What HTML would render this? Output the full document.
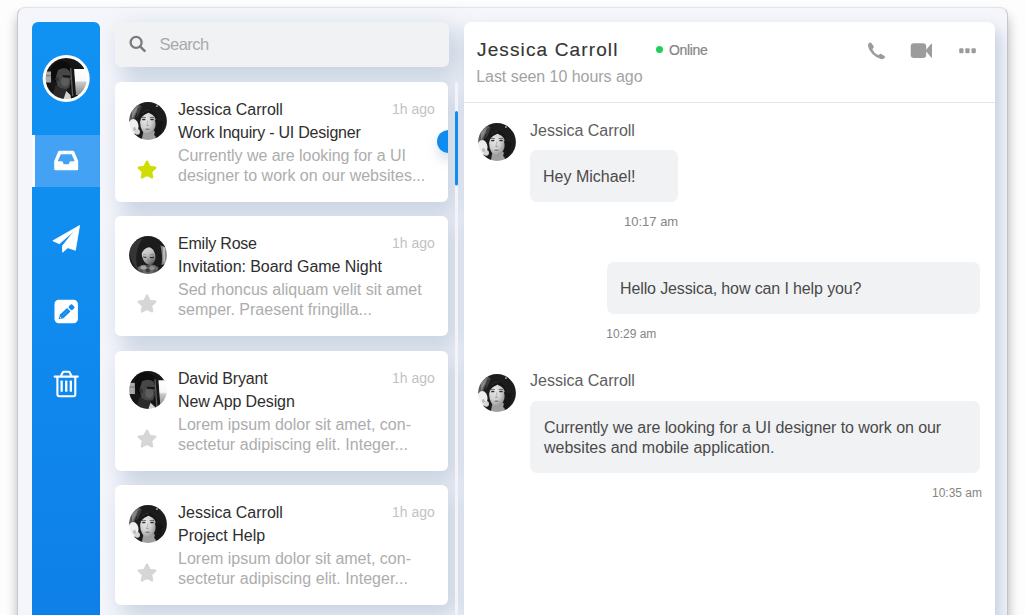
<!DOCTYPE html>
<html lang="en">
<head>
<meta charset="utf-8">
<title>Mail</title>
<style>
*{box-sizing:border-box;margin:0;padding:0}
html,body{width:1025px;height:615px;overflow:hidden;background:#fdfdfd;font-family:"Liberation Sans",sans-serif;}
#stage{position:absolute;left:0;top:0;width:1025px;height:615px;overflow:hidden;background:#fdfdfd}
#win{position:absolute;left:17px;top:7px;width:991px;height:640px;border-radius:8px;background:#f5f6fb;border:1px solid #c9c9cc;border-top-color:#e3e3e6;box-shadow:0 8px 12px rgba(0,0,0,.27)}
.abs{position:absolute}
.t{position:absolute;white-space:nowrap;line-height:20px;height:20px}
#side{position:absolute;left:32px;top:22px;width:68px;height:620px;background:linear-gradient(to bottom,#1092f3 0,#108ef0 190px,#0e80e8 593px);border-radius:6px 6px 0 0}
#side .act{position:absolute;left:3px;top:112.500px;width:65px;height:52.500px;background:#43a2f4}
#side .actbar{position:absolute;left:0;top:112.500px;width:3.200px;height:52.500px;background:#fbfbfe}
#search{position:absolute;left:115px;top:22px;width:334px;height:45px;border-radius:6px;background:#f1f2f4;box-shadow:8px 9px 22px 3px rgba(80,118,160,.27)}
.card{position:absolute;left:115px;width:333px;height:120px;background:#fff;border-radius:6px;box-shadow:8px 9px 22px 3px rgba(80,118,160,.27);overflow:hidden}
.av{position:absolute;width:38px;height:38px;display:block}
.star{position:absolute;display:block}
.ic{position:absolute;display:block;left:0;top:0}
.name{font-size:16px;color:#2e2e2e}
.subj{font-size:16px;color:#2e2e2e}
.prev{font-size:16px;color:#adadad}
.ago{font-size:14px;color:#c2c2c2}
#chat{position:absolute;left:464px;top:22px;width:531px;height:620px;background:#fff;border-radius:7px 7px 0 0;box-shadow:5px 8px 16px rgba(82,114,162,.31)}
.bub{position:absolute;background:#f1f2f4;border-radius:7px}
.msg{font-size:16px;color:#4a4a4a}
.tm{font-size:13px;color:#858585}
.who{font-size:16px;color:#5e5e5e}
</style>
</head>
<body>
<div id="stage">
<div id="win"></div>

<!-- sidebar -->
<div id="side"><div class="act"></div><div class="actbar"></div></div>



<!-- list -->
<div id="search"></div>
<div class="t" id="srch" style="left:159.500px;top:33.800px;font-size:16.500px;color:#a9a9a9;letter-spacing:-.5px">Search</div>

<div class="card" style="top:82px">
<svg class="av" style="left:14.200px;top:19.600px" width="38" height="38" viewBox="0 0 38 38"><defs><clipPath id="k1"><circle cx="19" cy="19" r="18.900"/></clipPath><filter id="f1" x="-10%" y="-10%" width="120%" height="120%"><feGaussianBlur stdDeviation=".55"/></filter><radialGradient id="g1" cx=".36" cy=".33" r=".8"><stop offset="0" stop-color="#e8e8e8"/><stop offset=".5" stop-color="#d0d0d0"/><stop offset=".8" stop-color="#a2a2a2"/><stop offset="1" stop-color="#808080"/></radialGradient></defs><g clip-path="url(#k1)"><g filter="url(#f1)"><rect x="-2" y="-2" width="42" height="42" fill="#1b1b1b"/><path d="M-1 9 L8 2 L12 4 L7 12 L4 21 L-1 24Z" fill="#5a5a5a"/><path d="M3 9 L9 4 L7 10 L3 17Z" fill="#858585"/><path d="M9 6 L13 4 L9.500 13 L7 16Z" fill="#3d3d3d"/><ellipse cx="4.300" cy="24.500" rx="5.200" ry="7.500" fill="#efefef"/><ellipse cx="8.300" cy="29.800" rx="2.700" ry="2.900" fill="#d6d6d6"/><ellipse cx="5.500" cy="27" rx="1.600" ry="2" fill="#bdbdbd"/><path d="M14.500 29 L25.500 29 L27.500 39 L12.500 39Z" fill="#9f9f9f"/><ellipse cx="19" cy="20.600" rx="7.900" ry="12" fill="url(#g1)"/><path d="M10.600 20 Q11.300 9 19.500 8 Q27.700 8.500 28.400 21 Q26.500 13.500 21 11.600 Q19.500 9.800 18 11.600 Q12.500 13.500 10.600 20Z" fill="#181818"/><path d="M25.800 18 Q28.500 25 25 33 L30 37 L34 20Z" fill="#181818"/><path d="M12.600 15.700 Q14.800 14.900 17 15.700" stroke="#4a4a4a" stroke-width=".8" fill="none"/><path d="M20.800 15.700 Q23 14.900 25.200 15.700" stroke="#4a4a4a" stroke-width=".8" fill="none"/><ellipse cx="14.800" cy="17.500" rx="1.800" ry=".85" fill="#2b2b2b"/><ellipse cx="23" cy="17.500" rx="1.800" ry=".85" fill="#2b2b2b"/><path d="M18.700 18.500 L18.200 22.600" stroke="#b2b2b2" stroke-width=".9" fill="none"/><ellipse cx="18.500" cy="23.300" rx="1.500" ry=".6" fill="#9a9a9a"/><path d="M15.800 26.900 Q18.500 25.900 21.200 26.900 Q18.500 28.700 15.800 26.900Z" fill="#6e6e6e"/><rect x="27" y="3.200" width="1.800" height="1.800" fill="#9a9a9a"/></g></g></svg>
<svg class="star" style="left:22px;top:77.800px" width="20" height="20" viewBox="0 0 20 20"><path d="M10.00 1.60 L12.59 6.84 L18.37 7.68 L14.18 11.76 L15.17 17.52 L10.00 14.80 L4.83 17.52 L5.82 11.76 L1.63 7.68 L7.41 6.84Z" fill="#cede05" stroke="#cede05" stroke-width="2.200" stroke-linejoin="round"/></svg>
<div class="t name" id="c0n" style="left:63px;top:18px">Jessica Carroll</div>
<div class="t ago" id="c0a" style="left:277px;top:17.200px">1h ago</div>
<div class="t subj" id="c0s" style="left:63px;top:41px;letter-spacing:-.216px">Work Inquiry - UI Designer</div>
<div class="t prev" id="c0p" style="left:63px;top:64px;letter-spacing:-.044px">Currently we are looking for a UI</div>
<div class="t prev" id="c0q" style="left:63px;top:84px">designer to work on our websites...</div>
<div class="abs" style="left:322px;top:47.800px;width:23.200px;height:23.200px;border-radius:50%;background:#108cf0;box-shadow:0 7px 12px rgba(60,100,170,.2)"></div>
</div>
<div class="card" style="top:216px">
<svg class="av" style="left:14.200px;top:19.600px" width="38" height="38" viewBox="0 0 38 38"><defs><clipPath id="k2"><circle cx="19" cy="19" r="18.900"/></clipPath><filter id="f2" x="-10%" y="-10%" width="120%" height="120%"><feGaussianBlur stdDeviation=".55"/></filter><linearGradient id="g2" x1=".3" y1="0" x2=".6" y2="1"><stop offset="0" stop-color="#dedede"/><stop offset=".45" stop-color="#c4c4c4"/><stop offset=".8" stop-color="#828282"/><stop offset="1" stop-color="#505050"/></linearGradient></defs><g clip-path="url(#k2)"><g filter="url(#f2)"><rect x="-2" y="-2" width="42" height="42" fill="#1e1e1e"/><path d="M1 14 Q4 4 14 2.500 Q9 8 7.500 18 Q6.500 27 9 34 Q1 27 1 14Z" fill="#363636"/><path d="M31.500 9.500 L39 12 L39 27 L32.500 29 Q34 19 31.500 9.500Z" fill="#8a8a8a"/><path d="M34 11 L36 11.500 L36 26 L34.500 26.500Z" fill="#bdbdbd"/><ellipse cx="19.600" cy="19.300" rx="6.600" ry="9.800" transform="rotate(-15 19.600 19.300)" fill="url(#g2)"/><path d="M12 18.500 Q12.500 9.300 19 8.300 Q27.200 8.800 28 19.500 Q25.500 13 20.500 11.200 Q15 11.500 12 18.500Z" fill="#1a1a1a"/><path d="M26.500 16 Q29 22 27 29 L31 30 L32 18Z" fill="#1a1a1a"/><path d="M14 18.900 Q15.600 18.100 17.400 18.800" stroke="#7a7a7a" stroke-width=".7" fill="none"/><path d="M20.800 19 Q22.800 18.200 25 18.900" stroke="#7a7a7a" stroke-width=".7" fill="none"/><path d="M14.300 20.700 Q15.800 21.800 17.400 21" stroke="#2c2c2c" stroke-width="1.100" fill="none"/><path d="M20.900 21.200 Q22.900 22.300 24.900 20.900" stroke="#2c2c2c" stroke-width="1.200" fill="none"/><ellipse cx="19.300" cy="24.300" rx="1.300" ry=".8" fill="#858585"/><path d="M8.500 31.500 Q13 27.500 18 29.500 Q24 27 29.500 31.500 L27 39 L11 39Z" fill="#686868"/><ellipse cx="14.500" cy="31.500" rx="3" ry="2" fill="#a3a3a3"/><ellipse cx="23" cy="32" rx="2.800" ry="2" fill="#8e8e8e"/><ellipse cx="18.800" cy="34.500" rx="2.200" ry="2" fill="#3d3d3d"/><ellipse cx="19" cy="30" rx="1.800" ry="1.300" fill="#4a4a4a"/><ellipse cx="26" cy="35" rx="2" ry="1.500" fill="#4d4d4d"/><ellipse cx="12" cy="35" rx="2" ry="1.500" fill="#505050"/></g></g></svg>
<svg class="star" style="left:22px;top:77.800px" width="20" height="20" viewBox="0 0 20 20"><path d="M10.00 1.60 L12.59 6.84 L18.37 7.68 L14.18 11.76 L15.17 17.52 L10.00 14.80 L4.83 17.52 L5.82 11.76 L1.63 7.68 L7.41 6.84Z" fill="#d6d6d6" stroke="#d6d6d6" stroke-width="2.200" stroke-linejoin="round"/></svg>
<div class="t name" id="c1n" style="left:63px;top:18px;letter-spacing:-.21px">Emily Rose</div>
<div class="t ago" id="c1a" style="left:277px;top:17.200px">1h ago</div>
<div class="t subj" id="c1s" style="left:63px;top:41px;letter-spacing:-.056px">Invitation: Board Game Night</div>
<div class="t prev" id="c1p" style="left:63px;top:64px">Sed rhoncus aliquam velit sit amet</div>
<div class="t prev" id="c1q" style="left:63px;top:84px">semper. Praesent fringilla...</div>
</div>
<div class="card" style="top:351px">
<svg class="av" style="left:14.200px;top:19.600px" width="38" height="38" viewBox="0 0 38 38"><defs><clipPath id="k3"><circle cx="19" cy="19" r="18.900"/></clipPath><filter id="f3" x="-10%" y="-10%" width="120%" height="120%"><feGaussianBlur stdDeviation=".55"/></filter><linearGradient id="g3" x1="0" y1="0" x2="0" y2="1"><stop offset="0" stop-color="#fff"/><stop offset=".45" stop-color="#f8f8f8"/><stop offset=".52" stop-color="#c9c9c9"/><stop offset="1" stop-color="#858585"/></linearGradient></defs><g clip-path="url(#k3)"><g filter="url(#f3)"><g transform="translate(21.400 19) scale(1.020) translate(-66.200 -78.500)">
<rect x="40" y="52" width="52" height="52" fill="#131313"/>
<rect x="40" y="71.500" width="11" height="11" fill="#a9a9a9"/>
<rect x="40" y="75" width="11" height="1.200" fill="#7d7d7d"/>
<path d="M73.500 69 L92 69 L92 95 L75.500 95Z" fill="url(#g3)"/>
<ellipse cx="61.500" cy="72.500" rx="10.500" ry="11" fill="#0d0d0d"/>
<path d="M55.500 85 L67 89 L67 101 L51 101Z" fill="#2b2b2b"/>
<path d="M58 70 Q64.500 66.500 69.300 70.500 L70.600 74.500 L72 78.600 L70.200 80 L70.500 83.300 L68.600 88.500 Q62 90 57.500 86 L55.500 78.500 Z" fill="#474747"/>
<ellipse cx="65" cy="81.500" rx="4" ry="5" fill="#5c5c5c"/>
<ellipse cx="57.300" cy="79.500" rx="1.600" ry="2.600" fill="#333"/>
<path d="M62.500 75.200 L71 75.600 L70.800 77.700 L63.500 77.400Z" fill="#121212"/>
<path d="M70.200 62 L73.600 62 L76.300 100 L72.800 100Z" fill="#171717"/>
<path d="M70 68 L71.300 68 L73.300 96 L72 96Z" fill="#5c5c5c"/>
<path d="M62.500 102 L66.300 91 L70.500 95 L71.500 102Z" fill="#d2d2d2"/>
</g></g></g></svg>
<svg class="star" style="left:22px;top:77.800px" width="20" height="20" viewBox="0 0 20 20"><path d="M10.00 1.60 L12.59 6.84 L18.37 7.68 L14.18 11.76 L15.17 17.52 L10.00 14.80 L4.83 17.52 L5.82 11.76 L1.63 7.68 L7.41 6.84Z" fill="#d6d6d6" stroke="#d6d6d6" stroke-width="2.200" stroke-linejoin="round"/></svg>
<div class="t name" id="c2n" style="left:63px;top:18px;letter-spacing:-.18px">David Bryant</div>
<div class="t ago" id="c2a" style="left:277px;top:17.200px">1h ago</div>
<div class="t subj" id="c2s" style="left:63px;top:41px;letter-spacing:-.115px">New App Design</div>
<div class="t prev" id="c2p" style="left:63px;top:64px">Lorem ipsum dolor sit amet, con-</div>
<div class="t prev" id="c2q" style="left:63px;top:84px;letter-spacing:.037px">sectetur adipiscing elit. Integer...</div>
</div>
<div class="card" style="top:485px">
<svg class="av" style="left:14.200px;top:19.600px" width="38" height="38" viewBox="0 0 38 38"><defs><clipPath id="k4"><circle cx="19" cy="19" r="18.900"/></clipPath><filter id="f4" x="-10%" y="-10%" width="120%" height="120%"><feGaussianBlur stdDeviation=".55"/></filter><radialGradient id="g4" cx=".36" cy=".33" r=".8"><stop offset="0" stop-color="#e8e8e8"/><stop offset=".5" stop-color="#d0d0d0"/><stop offset=".8" stop-color="#a2a2a2"/><stop offset="1" stop-color="#808080"/></radialGradient></defs><g clip-path="url(#k4)"><g filter="url(#f4)"><rect x="-2" y="-2" width="42" height="42" fill="#1b1b1b"/><path d="M-1 9 L8 2 L12 4 L7 12 L4 21 L-1 24Z" fill="#5a5a5a"/><path d="M3 9 L9 4 L7 10 L3 17Z" fill="#858585"/><path d="M9 6 L13 4 L9.500 13 L7 16Z" fill="#3d3d3d"/><ellipse cx="4.300" cy="24.500" rx="5.200" ry="7.500" fill="#efefef"/><ellipse cx="8.300" cy="29.800" rx="2.700" ry="2.900" fill="#d6d6d6"/><ellipse cx="5.500" cy="27" rx="1.600" ry="2" fill="#bdbdbd"/><path d="M14.500 29 L25.500 29 L27.500 39 L12.500 39Z" fill="#9f9f9f"/><ellipse cx="19" cy="20.600" rx="7.900" ry="12" fill="url(#g4)"/><path d="M10.600 20 Q11.300 9 19.500 8 Q27.700 8.500 28.400 21 Q26.500 13.500 21 11.600 Q19.500 9.800 18 11.600 Q12.500 13.500 10.600 20Z" fill="#181818"/><path d="M25.800 18 Q28.500 25 25 33 L30 37 L34 20Z" fill="#181818"/><path d="M12.600 15.700 Q14.800 14.900 17 15.700" stroke="#4a4a4a" stroke-width=".8" fill="none"/><path d="M20.800 15.700 Q23 14.900 25.200 15.700" stroke="#4a4a4a" stroke-width=".8" fill="none"/><ellipse cx="14.800" cy="17.500" rx="1.800" ry=".85" fill="#2b2b2b"/><ellipse cx="23" cy="17.500" rx="1.800" ry=".85" fill="#2b2b2b"/><path d="M18.700 18.500 L18.200 22.600" stroke="#b2b2b2" stroke-width=".9" fill="none"/><ellipse cx="18.500" cy="23.300" rx="1.500" ry=".6" fill="#9a9a9a"/><path d="M15.800 26.900 Q18.500 25.900 21.200 26.900 Q18.500 28.700 15.800 26.900Z" fill="#6e6e6e"/><rect x="27" y="3.200" width="1.800" height="1.800" fill="#9a9a9a"/></g></g></svg>
<svg class="star" style="left:22px;top:77.800px" width="20" height="20" viewBox="0 0 20 20"><path d="M10.00 1.60 L12.59 6.84 L18.37 7.68 L14.18 11.76 L15.17 17.52 L10.00 14.80 L4.83 17.52 L5.82 11.76 L1.63 7.68 L7.41 6.84Z" fill="#d6d6d6" stroke="#d6d6d6" stroke-width="2.200" stroke-linejoin="round"/></svg>
<div class="t name" id="c3n" style="left:63px;top:18px">Jessica Carroll</div>
<div class="t ago" id="c3a" style="left:277px;top:17.200px">1h ago</div>
<div class="t subj" id="c3s" style="left:63px;top:41px">Project Help</div>
<div class="t prev" id="c3p" style="left:63px;top:64px">Lorem ipsum dolor sit amet, con-</div>
<div class="t prev" id="c3q" style="left:63px;top:84px;letter-spacing:.037px">sectetur adipiscing elit. Integer...</div>
</div>

<!-- chat -->
<div id="chat">
<div class="t" id="hname" style="left:13px;top:17.500px;font-size:19px;color:#353535;letter-spacing:1.13px;-webkit-text-stroke:.14px #353535">Jessica Carroll</div>
<div class="t" id="hseen" style="left:12.200px;top:45px;font-size:16px;color:#a3a3a3;letter-spacing:-.04px">Last seen 10 hours ago</div>
<div class="abs" style="left:192px;top:24px;width:7px;height:7px;border-radius:50%;background:#21cf5c"></div>
<div class="t" id="honl" style="left:205px;top:18px;-webkit-text-stroke:.2px #858585;font-size:14px;color:#858585;letter-spacing:-.33px">Online</div>
<div class="abs" style="left:0;top:80px;width:531px;height:1px;background:#e4e4e4"></div>

<svg class="av" style="left:14px;top:101px" width="38" height="38" viewBox="0 0 38 38"><defs><clipPath id="k5"><circle cx="19" cy="19" r="18.900"/></clipPath><filter id="f5" x="-10%" y="-10%" width="120%" height="120%"><feGaussianBlur stdDeviation=".55"/></filter><radialGradient id="g5" cx=".36" cy=".33" r=".8"><stop offset="0" stop-color="#e8e8e8"/><stop offset=".5" stop-color="#d0d0d0"/><stop offset=".8" stop-color="#a2a2a2"/><stop offset="1" stop-color="#808080"/></radialGradient></defs><g clip-path="url(#k5)"><g filter="url(#f5)"><rect x="-2" y="-2" width="42" height="42" fill="#1b1b1b"/><path d="M-1 9 L8 2 L12 4 L7 12 L4 21 L-1 24Z" fill="#5a5a5a"/><path d="M3 9 L9 4 L7 10 L3 17Z" fill="#858585"/><path d="M9 6 L13 4 L9.500 13 L7 16Z" fill="#3d3d3d"/><ellipse cx="4.300" cy="24.500" rx="5.200" ry="7.500" fill="#efefef"/><ellipse cx="8.300" cy="29.800" rx="2.700" ry="2.900" fill="#d6d6d6"/><ellipse cx="5.500" cy="27" rx="1.600" ry="2" fill="#bdbdbd"/><path d="M14.500 29 L25.500 29 L27.500 39 L12.500 39Z" fill="#9f9f9f"/><ellipse cx="19" cy="20.600" rx="7.900" ry="12" fill="url(#g5)"/><path d="M10.600 20 Q11.300 9 19.500 8 Q27.700 8.500 28.400 21 Q26.500 13.500 21 11.600 Q19.500 9.800 18 11.600 Q12.500 13.500 10.600 20Z" fill="#181818"/><path d="M25.800 18 Q28.500 25 25 33 L30 37 L34 20Z" fill="#181818"/><path d="M12.600 15.700 Q14.800 14.900 17 15.700" stroke="#4a4a4a" stroke-width=".8" fill="none"/><path d="M20.800 15.700 Q23 14.900 25.200 15.700" stroke="#4a4a4a" stroke-width=".8" fill="none"/><ellipse cx="14.800" cy="17.500" rx="1.800" ry=".85" fill="#2b2b2b"/><ellipse cx="23" cy="17.500" rx="1.800" ry=".85" fill="#2b2b2b"/><path d="M18.700 18.500 L18.200 22.600" stroke="#b2b2b2" stroke-width=".9" fill="none"/><ellipse cx="18.500" cy="23.300" rx="1.500" ry=".6" fill="#9a9a9a"/><path d="M15.800 26.900 Q18.500 25.900 21.200 26.900 Q18.500 28.700 15.800 26.900Z" fill="#6e6e6e"/><rect x="27" y="3.200" width="1.800" height="1.800" fill="#9a9a9a"/></g></g></svg>
<div class="t who" id="w1" style="left:66px;top:98.700px">Jessica Carroll</div>
<div class="bub" style="left:66px;top:128px;width:148px;height:52px"></div>
<div class="t msg" id="m1" style="left:79px;top:145px">Hey Michael!</div>
<div class="t tm" id="t1" style="left:160px;top:190px">10:17 am</div>

<div class="bub" style="left:143px;top:240px;width:373px;height:52px"></div>
<div class="t msg" id="m2" style="left:156px;top:257.400px;letter-spacing:-.121px">Hello Jessica, how can I help you?</div>
<div class="t tm" id="t2" style="left:142.300px;top:302px;font-size:12px">10:29 am</div>

<svg class="av" style="left:14px;top:352px" width="38" height="38" viewBox="0 0 38 38"><defs><clipPath id="k6"><circle cx="19" cy="19" r="18.900"/></clipPath><filter id="f6" x="-10%" y="-10%" width="120%" height="120%"><feGaussianBlur stdDeviation=".55"/></filter><radialGradient id="g6" cx=".36" cy=".33" r=".8"><stop offset="0" stop-color="#e8e8e8"/><stop offset=".5" stop-color="#d0d0d0"/><stop offset=".8" stop-color="#a2a2a2"/><stop offset="1" stop-color="#808080"/></radialGradient></defs><g clip-path="url(#k6)"><g filter="url(#f6)"><rect x="-2" y="-2" width="42" height="42" fill="#1b1b1b"/><path d="M-1 9 L8 2 L12 4 L7 12 L4 21 L-1 24Z" fill="#5a5a5a"/><path d="M3 9 L9 4 L7 10 L3 17Z" fill="#858585"/><path d="M9 6 L13 4 L9.500 13 L7 16Z" fill="#3d3d3d"/><ellipse cx="4.300" cy="24.500" rx="5.200" ry="7.500" fill="#efefef"/><ellipse cx="8.300" cy="29.800" rx="2.700" ry="2.900" fill="#d6d6d6"/><ellipse cx="5.500" cy="27" rx="1.600" ry="2" fill="#bdbdbd"/><path d="M14.500 29 L25.500 29 L27.500 39 L12.500 39Z" fill="#9f9f9f"/><ellipse cx="19" cy="20.600" rx="7.900" ry="12" fill="url(#g6)"/><path d="M10.600 20 Q11.300 9 19.500 8 Q27.700 8.500 28.400 21 Q26.500 13.500 21 11.600 Q19.500 9.800 18 11.600 Q12.500 13.500 10.600 20Z" fill="#181818"/><path d="M25.800 18 Q28.500 25 25 33 L30 37 L34 20Z" fill="#181818"/><path d="M12.600 15.700 Q14.800 14.900 17 15.700" stroke="#4a4a4a" stroke-width=".8" fill="none"/><path d="M20.800 15.700 Q23 14.900 25.200 15.700" stroke="#4a4a4a" stroke-width=".8" fill="none"/><ellipse cx="14.800" cy="17.500" rx="1.800" ry=".85" fill="#2b2b2b"/><ellipse cx="23" cy="17.500" rx="1.800" ry=".85" fill="#2b2b2b"/><path d="M18.700 18.500 L18.200 22.600" stroke="#b2b2b2" stroke-width=".9" fill="none"/><ellipse cx="18.500" cy="23.300" rx="1.500" ry=".6" fill="#9a9a9a"/><path d="M15.800 26.900 Q18.500 25.900 21.200 26.900 Q18.500 28.700 15.800 26.900Z" fill="#6e6e6e"/><rect x="27" y="3.200" width="1.800" height="1.800" fill="#9a9a9a"/></g></g></svg>
<div class="t who" id="w2" style="left:66px;top:349px">Jessica Carroll</div>
<div class="bub" style="left:66px;top:378.700px;width:450px;height:72.500px"></div>
<div class="t msg" id="m3" style="left:80px;top:396px;letter-spacing:-.07px">Currently we are looking for a UI designer to work on our</div>
<div class="t msg" id="m4" style="left:80px;top:416px">websites and mobile application.</div>
<div class="t tm" id="t3" style="left:468px;top:460.500px;font-size:12px">10:35 am</div>
</div>

<svg class="ic" width="1025" height="615" viewBox="0 0 1025 615">
<defs><filter id="fme" x="-10%" y="-10%" width="120%" height="120%"><feGaussianBlur stdDeviation=".6"/></filter><clipPath id="kme"><circle cx="66.2" cy="78.500" r="20.600"/></clipPath>
<linearGradient id="gme" x1="0" y1="0" x2="0" y2="1"><stop offset="0" stop-color="#fff"/><stop offset=".45" stop-color="#f8f8f8"/><stop offset=".52" stop-color="#c9c9c9"/><stop offset="1" stop-color="#858585"/></linearGradient></defs>
<circle cx="66.2" cy="78.500" r="23.500" fill="#fff"/>
<g clip-path="url(#kme)"><g filter="url(#fme)">
<rect x="40" y="52" width="52" height="52" fill="#131313"/>
<rect x="40" y="71.500" width="11" height="11" fill="#a9a9a9"/>
<rect x="40" y="75" width="11" height="1.200" fill="#7d7d7d"/>
<path d="M73.500 69 L92 69 L92 95 L75.500 95Z" fill="url(#gme)"/>
<ellipse cx="61.500" cy="72.500" rx="10.500" ry="11" fill="#0d0d0d"/>
<path d="M55.500 85 L67 89 L67 101 L51 101Z" fill="#2b2b2b"/>
<path d="M58 70 Q64.500 66.500 69.300 70.500 L70.600 74.500 L72 78.600 L70.200 80 L70.500 83.300 L68.600 88.500 Q62 90 57.500 86 L55.500 78.500 Z" fill="#474747"/>
<ellipse cx="65" cy="81.500" rx="4" ry="5" fill="#5c5c5c"/>
<ellipse cx="57.300" cy="79.500" rx="1.600" ry="2.600" fill="#333"/>
<path d="M62.500 75.200 L71 75.600 L70.800 77.700 L63.500 77.400Z" fill="#121212"/>
<path d="M70.200 62 L73.600 62 L76.300 100 L72.800 100Z" fill="#171717"/>
<path d="M70 68 L71.300 68 L73.300 96 L72 96Z" fill="#5c5c5c"/>
<path d="M62.500 102 L66.300 91 L70.500 95 L71.500 102Z" fill="#d2d2d2"/>
</g></g>
<!-- inbox -->
<path fill="#fff" fill-rule="evenodd" d="M59.700 150.700 L72.700 150.700 Q73.800 150.700 74.300 151.800 L78.200 161 L78.200 169 Q78.200 170.300 76.900 170.300 L55.500 170.300 Q54.200 170.300 54.200 169 L54.200 161 L58.100 151.800 Q58.600 150.700 59.700 150.700Z M60.800 154.200 L57.700 161.300 L62.300 161.300 L63.800 164.300 L68.600 164.300 L70.100 161.300 L74.700 161.300 L71.600 154.200Z"/>
<!-- paper plane -->
<path fill="#fff" stroke="#fff" stroke-width=".8" stroke-linejoin="round" d="M79.600 225.500 L52.900 240.800 L59.300 243.800 L74.600 230.400 L62.400 246 L62.700 252.200 L67.800 247.700 L75.400 250.300Z"/>
<!-- edit -->
<rect x="54.500" y="299.800" width="23.400" height="23.400" rx="4.200" fill="#fff"/>
<g transform="translate(58.600 319.300) rotate(-43)" fill="#108cf0">
<path d="M0 0 L4.200 -2.500 L14 -2.500 L14 2.500 L4.200 2.500Z"/>
<rect x="15.300" y="-2.500" width="4.800" height="5" rx="1.200"/>
<path d="M1.600 0 L3 -.9 L3 .9Z" fill="#fff"/>
<path d="M5.500 0 L12.500 0" stroke="#7cbcf7" stroke-width=".7" stroke-dasharray="1 .6"/>
</g>
<!-- trash -->
<g fill="none" stroke="#fff" stroke-width="2.100" stroke-linecap="round" stroke-linejoin="round">
<path d="M54.600 376.600 L77.800 376.600"/>
<path d="M61 376 L62.600 372.600 Q63 371.800 64 371.800 L68.400 371.800 Q69.400 371.800 69.800 372.600 L71.400 376"/>
<path d="M57.400 377.500 L57.400 394.300 Q57.400 396.200 59.300 396.200 L73.400 396.200 Q75.300 396.200 75.300 394.300 L75.300 377.500"/>
</g>
<g fill="#fff"><rect x="60.500" y="380.600" width="2.300" height="11.200" rx=".6"/><rect x="65.100" y="380.600" width="2.300" height="11.200" rx=".6"/><rect x="69.700" y="380.600" width="2.300" height="11.200" rx=".6"/></g>
<!-- search -->
<circle cx="136.100" cy="42.400" r="5.500" fill="none" stroke="#7b7b7b" stroke-width="2.300"/>
<path d="M140.300 46.700 L144.600 50.800" stroke="#7b7b7b" stroke-width="2.500" stroke-linecap="round"/>
<!-- scrollbar -->
<rect x="455" y="82" width="3" height="540" rx="1.500" fill="#f3f4f9"/>
<rect x="455" y="111" width="3" height="74.500" rx="1.500" fill="#108cf0"/>
<!-- header icons -->
<path fill="#9c9c9c" d="M869.600 42.600 Q870.600 42 871.400 43 L873.600 46.300 Q874.200 47.300 873.400 48.100 L872.300 49.200 Q874.200 53.500 878.400 55.300 L879.500 54.200 Q880.300 53.400 881.300 54 L884.500 56 Q885.500 56.700 884.800 57.700 Q883.300 59.600 880.800 59 Q876.200 57.800 872.500 54 Q868.800 50.200 868 46.200 Q867.600 43.800 869.600 42.600Z"/>
<rect x="910.700" y="43.200" width="15.500" height="14.800" rx="3.200" fill="#9c9c9c"/>
<path d="M925.500 50.600 L931.200 43.800 Q932 43 932 44.200 L932 57 Q932 58.200 931.200 57.400Z" fill="#9c9c9c"/>
<rect x="959.200" y="48.200" width="4.300" height="5.100" rx="1.100" fill="#9c9c9c"/>
<rect x="965.300" y="48.200" width="4.300" height="5.100" rx="1.100" fill="#9c9c9c"/>
<rect x="971.500" y="48.200" width="4.300" height="5.100" rx="1.100" fill="#9c9c9c"/>
</svg>
</div>
</body>
</html>
